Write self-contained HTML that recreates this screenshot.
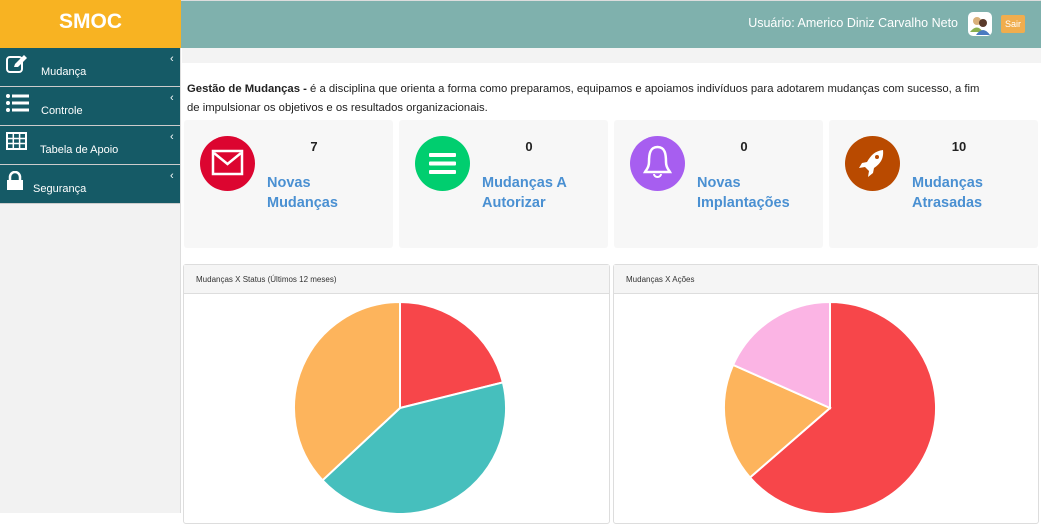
<!DOCTYPE html>
<html><head><meta charset="utf-8"><style>
*{margin:0;padding:0;box-sizing:border-box}
body{width:1041px;height:513px;overflow:hidden;font-family:"Liberation Sans","DejaVu Sans",sans-serif;background:#fff;position:relative}
.logo{position:absolute;left:0;top:0;width:181px;height:48px;background:#f8b322;color:#fff;font-weight:bold;font-size:21px;text-align:center;line-height:44px}
.top{position:absolute;left:181px;top:0;right:0;height:48px;background:#7fb1ad;border-top:1px solid #ddd}
.user{position:absolute;right:83px;top:16px;color:#fff;font-size:12.5px}
.av{position:absolute;left:968px;top:12px;width:24px;height:24px;background:#fff;border-radius:5px}
.sair{position:absolute;left:1001px;top:15px;width:24px;height:18px;background:#f0ad4e;color:#fff;font-size:9px;text-align:center;line-height:18px;border-radius:2px}
.side{position:absolute;left:0;top:48px;width:181px;bottom:0;background:#f2f2f2;border-right:1px solid #ddd}
.mi{height:39px;background:#155a66;border-bottom:1px solid #ccc;position:relative;color:#fff;font-size:11px}
.mi span.t{position:absolute;top:18px}
.mi .ar{position:absolute;left:170px;top:5px;font-size:11px}
.mi svg{position:absolute;left:6px;top:6px}
.band{position:absolute;left:182px;top:48px;right:0;height:15px;background:#f3f3f3}
.intro{position:absolute;left:187px;top:80px;font-size:11.3px;line-height:19px;color:#222;width:800px}
.card{position:absolute;top:120px;width:209px;height:128px;background:#f7f7f7;border-radius:3px}
.card .c{position:absolute;left:16px;top:16px;width:55px;height:55px;border-radius:50%}
.card .n{position:absolute;left:115px;top:19px;width:30px;text-align:center;font-weight:bold;font-size:13px;color:#222}
.card .l{position:absolute;left:83px;top:53px;color:#4a90d2;font-weight:bold;font-size:14.5px;line-height:20px}
.panel{position:absolute;top:264px;height:260px;border:1px solid #ddd;border-radius:3px;background:#fff}
.panel .h{height:29px;background:#f5f5f5;border-bottom:1px solid #ddd;font-size:8px;color:#333;padding:10px 12px}
</style></head><body>
<div class="logo">SMOC</div>
<div class="top"></div>
<div class="user">Usuário: Americo Diniz Carvalho Neto</div>
<div class="av"><svg width="24" height="24"><circle cx="9" cy="9" r="4" fill="#d9b07a"/><path d="M2 20 Q9 11 15 20Z" fill="#8ab04f"/><circle cx="15" cy="11" r="4" fill="#5a3a2a"/><path d="M8 23 Q15 13 22 23Z" fill="#4a7ac0"/></svg></div>
<div class="sair">Sair</div>
<div class="side">
<div class="mi"><svg width="22" height="20" viewBox="0 0 22 20"><rect x="1" y="3" width="15" height="15" rx="3" fill="none" stroke="#fff" stroke-width="2"/><path d="M8 13 L9 10 L18 1 L21 4 L12 13Z" fill="#fff"/></svg><span class="t" style="left:41px">Mudança</span><span class="ar">‹</span></div>
<div class="mi"><svg width="24" height="20" viewBox="0 0 24 20"><circle cx="2" cy="3" r="2" fill="#fff"/><circle cx="2" cy="10" r="2" fill="#fff"/><circle cx="2" cy="17" r="2" fill="#fff"/><rect x="6" y="1.5" width="17" height="3" fill="#fff"/><rect x="6" y="8.5" width="17" height="3" fill="#fff"/><rect x="6" y="15.5" width="17" height="3" fill="#fff"/></svg><span class="t" style="left:41px">Controle</span><span class="ar">‹</span></div>
<div class="mi"><svg width="22" height="20" viewBox="0 0 22 20"><rect x="1" y="1" width="19" height="16" fill="none" stroke="#fff" stroke-width="2"/><path d="M1 6.5H20M1 11.5H20M7.3 1V17M13.6 1V17" stroke="#fff" stroke-width="1.5"/></svg><span class="t" style="left:40px">Tabela de Apoio</span><span class="ar">‹</span></div>
<div class="mi"><svg width="18" height="20" viewBox="0 0 18 20"><path d="M4 9V6a5 5 0 0 1 10 0v3" fill="none" stroke="#fff" stroke-width="2.5"/><rect x="1" y="9" width="16" height="10" fill="#fff"/></svg><span class="t" style="left:33px">Segurança</span><span class="ar">‹</span></div>
</div>
<div class="band"></div>
<div class="intro"><b>Gestão de Mudanças -</b> é a disciplina que orienta a forma como preparamos, equipamos e apoiamos indivíduos para adotarem mudanças com sucesso, a fim de impulsionar os objetivos e os resultados organizacionais.</div>

<div class="card" style="left:184px"><div class="c" style="background:#dc0530"><svg width="55" height="55"><rect x="13" y="15" width="29" height="23" fill="none" stroke="#fff" stroke-width="2.5"/><path d="M14 17 L27.5 28 L41 17" fill="none" stroke="#fff" stroke-width="2.5"/></svg></div><div class="n">7</div><div class="l">Novas<br>Mudanças</div></div>
<div class="card" style="left:399px"><div class="c" style="background:#00ce6f"><svg width="55" height="55"><rect x="14" y="17" width="27" height="4" rx="1" fill="#fff"/><rect x="14" y="25.5" width="27" height="4" rx="1" fill="#fff"/><rect x="14" y="34" width="27" height="4" rx="1" fill="#fff"/></svg></div><div class="n">0</div><div class="l">Mudanças A<br>Autorizar</div></div>
<div class="card" style="left:614px"><div class="c" style="background:#a75ef0"><svg width="55" height="55"><path d="M27.5 11 C20 11 19 18 19 26 C19 32 16 34 15 36 H40 C39 34 36 32 36 26 C36 18 35 11 27.5 11Z" fill="none" stroke="#fff" stroke-width="2.5"/><path d="M24 38 a3.5 3 0 0 0 7 0" fill="none" stroke="#fff" stroke-width="2"/></svg></div><div class="n">0</div><div class="l">Novas<br>Implantações</div></div>
<div class="card" style="left:829px"><div class="c" style="background:#b94a00"><svg width="55" height="55"><path d="M38 14 C30 15 26 19 22 26 L17 27 L14 32 L20 31 L24 35 L23 41 L28 37 L29 32 C35 28 39 23 38 14Z" fill="#fff"/><circle cx="32" cy="21" r="2" fill="#b94a00"/></svg></div><div class="n">10</div><div class="l">Mudanças<br>Atrasadas</div></div>

<div class="panel" style="left:183px;width:427px"><div class="h">Mudanças X Status (Últimos 12 meses)</div></div>
<div class="panel" style="left:613px;width:426px"><div class="h">Mudanças X Ações</div></div>
<svg style="position:absolute;left:0;top:0" width="1041" height="513">
<g stroke="#fff" stroke-width="2">
<path d="M400 408 L400 302 A106 106 0 0 1 502.9 382.4Z" fill="#f7464a"/>
<path d="M400 408 L502.9 382.4 A106 106 0 0 1 322.5 480.3Z" fill="#46bfbd"/>
<path d="M400 408 L322.5 480.3 A106 106 0 0 1 400 302Z" fill="#fdb45c"/>
<path d="M830 408 L830 302 A106 106 0 1 1 750 477.5Z" fill="#f7464a"/>
<path d="M830 408 L750 477.5 A106 106 0 0 1 733.1 364.9Z" fill="#fdb45c"/>
<path d="M830 408 L733.1 364.9 A106 106 0 0 1 830 302Z" fill="#fbb4e4"/>
</g></svg>
</body></html>
